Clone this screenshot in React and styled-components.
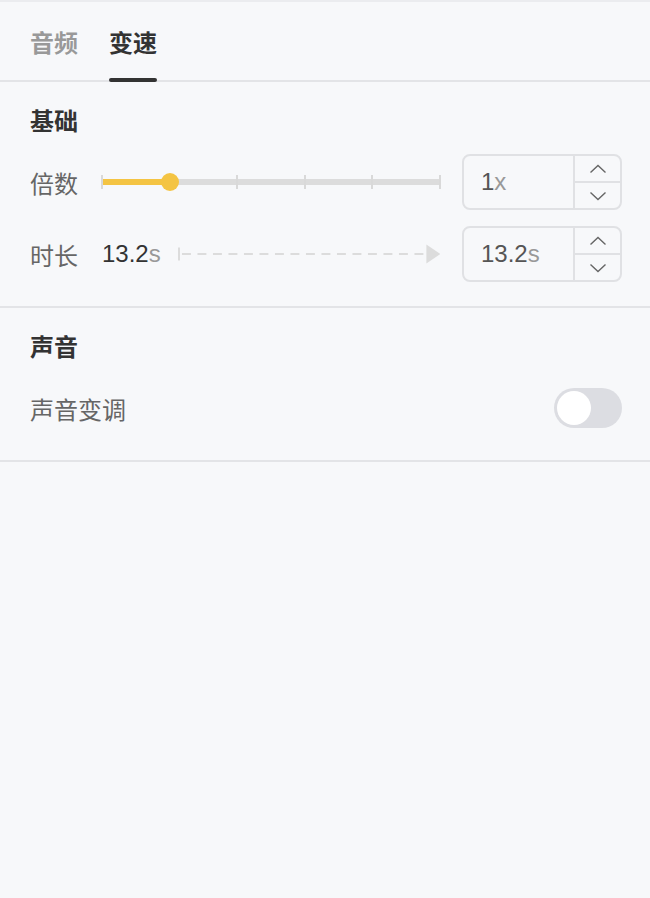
import { useState } from "react"
import styled, { createGlobalStyle } from "styled-components"

const GlobalStyle = createGlobalStyle`
  html, body {
    margin: 0;
    padding: 0;
    background: #f7f8fa;
  }
  body {
    font-family: "Liberation Sans", "Noto Sans CJK SC", sans-serif;
    color: #333;
  }
`;

const Panel = styled.div`
  width: 650px;
  min-height: 898px;
  background: #f7f8fa;
  border-top: 2px solid #ebecef;
  box-sizing: border-box;
`;

const TabBar = styled.div`
  display: flex;
  gap: 31px;
  height: 78px;
  padding: 0 30px;
  border-bottom: 2px solid #e3e4e7;
`;

const Tab = styled.div`
  position: relative;
  display: flex;
  align-items: center;
  font-size: 24px;
  font-weight: 700;
  color: ${(p) => (p.$active ? "#333" : "#999")};
  cursor: pointer;
`;

const TabLine = styled.span`
  position: absolute;
  left: 0;
  right: 0;
  bottom: -2px;
  height: 4px;
  border-radius: 2px;
  background: #333;
`;

const Section = styled.section`
  display: flex;
  flex-direction: column;
  gap: 16px;
  padding: 24px 28px 24px 30px;
  border-bottom: 2px solid #e3e4e7;
`;

const SectionTitle = styled.h3`
  margin: 0;
  height: 32px;
  line-height: 32px;
  font-size: 24px;
  font-weight: 700;
  color: #333;
`;

const Row = styled.div`
  display: flex;
  align-items: center;
  min-height: 56px;
`;

const Label = styled.span`
  width: ${(p) => (p.$wide ? "auto" : "72px")};
  flex-shrink: 0;
  font-size: 24px;
  color: #666;
`;

const Middle = styled.div`
  flex: 1;
  min-width: 0;
  display: flex;
  align-items: center;
  margin-right: 22px;
`;

const SliderTrack = styled.div`
  position: relative;
  flex: 1;
  height: 6px;
  background: #dcdcdc;
`;

const SliderFill = styled.div`
  position: absolute;
  left: 0;
  top: 0;
  bottom: 0;
  background: #f4c443;
`;

const Tick = styled.span`
  position: absolute;
  top: -4px;
  width: 2px;
  height: 14px;
  margin-left: -1px;
  background: #d9d9d9;
`;

const Thumb = styled.span`
  position: absolute;
  top: 50%;
  width: 18px;
  height: 18px;
  margin: -9px 0 0 -9px;
  border-radius: 50%;
  background: #f4c443;
`;

const Value = styled.span`
  font-size: 24px;
  color: ${(p) => (p.$muted ? "#555" : "#333")};
  white-space: nowrap;
`;

const Unit = styled.span`
  color: #999;
`;

const DurationLine = styled.svg`
  flex: 1;
  min-width: 0;
  height: 20px;
  margin-left: 17px;
`;

const NumberBox = styled.div`
  display: flex;
  flex-shrink: 0;
  width: 160px;
  height: 56px;
  box-sizing: border-box;
  border: 2px solid #e0e1e4;
  border-radius: 8px;
  overflow: hidden;
`;

const NumberText = styled.div`
  flex: 1;
  display: flex;
  align-items: center;
  padding-left: 17px;
`;

const Stepper = styled.div`
  width: 45px;
  display: flex;
  flex-direction: column;
  border-left: 2px solid #e0e1e4;
`;

const StepButton = styled.button`
  flex: 1;
  display: flex;
  align-items: center;
  justify-content: center;
  padding: 0;
  border: 0;
  background: transparent;
  cursor: pointer;

  & + & {
    border-top: 2px solid #e0e1e4;
  }
`;

const Switch = styled.button`
  margin-left: auto;
  width: 68px;
  height: 40px;
  padding: 3px;
  border: 0;
  border-radius: 20px;
  background: ${(p) => (p.$on ? "#f4c443" : "#dcdde2")};
  display: flex;
  justify-content: ${(p) => (p.$on ? "flex-end" : "flex-start")};
  cursor: pointer;
`;

const Knob = styled.span`
  width: 34px;
  height: 34px;
  border-radius: 50%;
  background: #fff;
`;

function Chevron({ up }) {
  return (
    <svg width="18" height="10" viewBox="0 0 18 10">
      <path
        d={up ? "M1.5 8.5 L9 1.5 L16.5 8.5" : "M1.5 1.5 L9 8.5 L16.5 1.5"}
        fill="none"
        stroke="#666"
        strokeWidth="1.4"
      />
    </svg>
  )
}

function NumberInput({ value, unit }) {
  return (
    <NumberBox>
      <NumberText>
        <Value $muted>
          {value}
          <Unit>{unit}</Unit>
        </Value>
      </NumberText>
      <Stepper>
        <StepButton><Chevron up /></StepButton>
        <StepButton><Chevron /></StepButton>
      </Stepper>
    </NumberBox>
  )
}

const ticks = [0, 40, 60, 80, 100]

export default function App() {
  const [tab, setTab] = useState(1)
  const [pitch, setPitch] = useState(false)
  const speed = 20

  return (
    <>
      <GlobalStyle />
      <Panel>
        <TabBar>
          {["音频", "变速"].map((t, i) => (
            <Tab key={t} $active={tab === i} onClick={() => setTab(i)}>
              {t}
              {tab === i && <TabLine />}
            </Tab>
          ))}
        </TabBar>

        <Section>
          <SectionTitle>基础</SectionTitle>
          <Row>
            <Label>倍数</Label>
            <Middle>
              <SliderTrack>
                <SliderFill style={{ width: `${speed}%` }} />
                {ticks.map((t) => (
                  <Tick key={t} style={{ left: `${t}%` }} />
                ))}
                <Thumb style={{ left: `${speed}%` }} />
              </SliderTrack>
            </Middle>
            <NumberInput value="1" unit="x" />
          </Row>
          <Row>
            <Label>时长</Label>
            <Middle>
              <Value>
                13.2<Unit>s</Unit>
              </Value>
              <DurationLine viewBox="0 0 264 20" preserveAspectRatio="none">
                <rect x="0" y="3.5" width="2" height="13" fill="#dcdcdc" />
                <line x1="4" y1="10" x2="250" y2="10" stroke="#dcdcdc" strokeWidth="2" strokeDasharray="9 6.6" />
                <path d="M250 0.5 L264 10 L250 19.5 Z" fill="#dcdcdc" />
              </DurationLine>
            </Middle>
            <NumberInput value="13.2" unit="s" />
          </Row>
        </Section>

        <Section>
          <SectionTitle>声音</SectionTitle>
          <Row>
            <Label $wide>声音变调</Label>
            <Switch $on={pitch} onClick={() => setPitch(!pitch)}>
              <Knob />
            </Switch>
          </Row>
        </Section>
      </Panel>
    </>
  )
}
